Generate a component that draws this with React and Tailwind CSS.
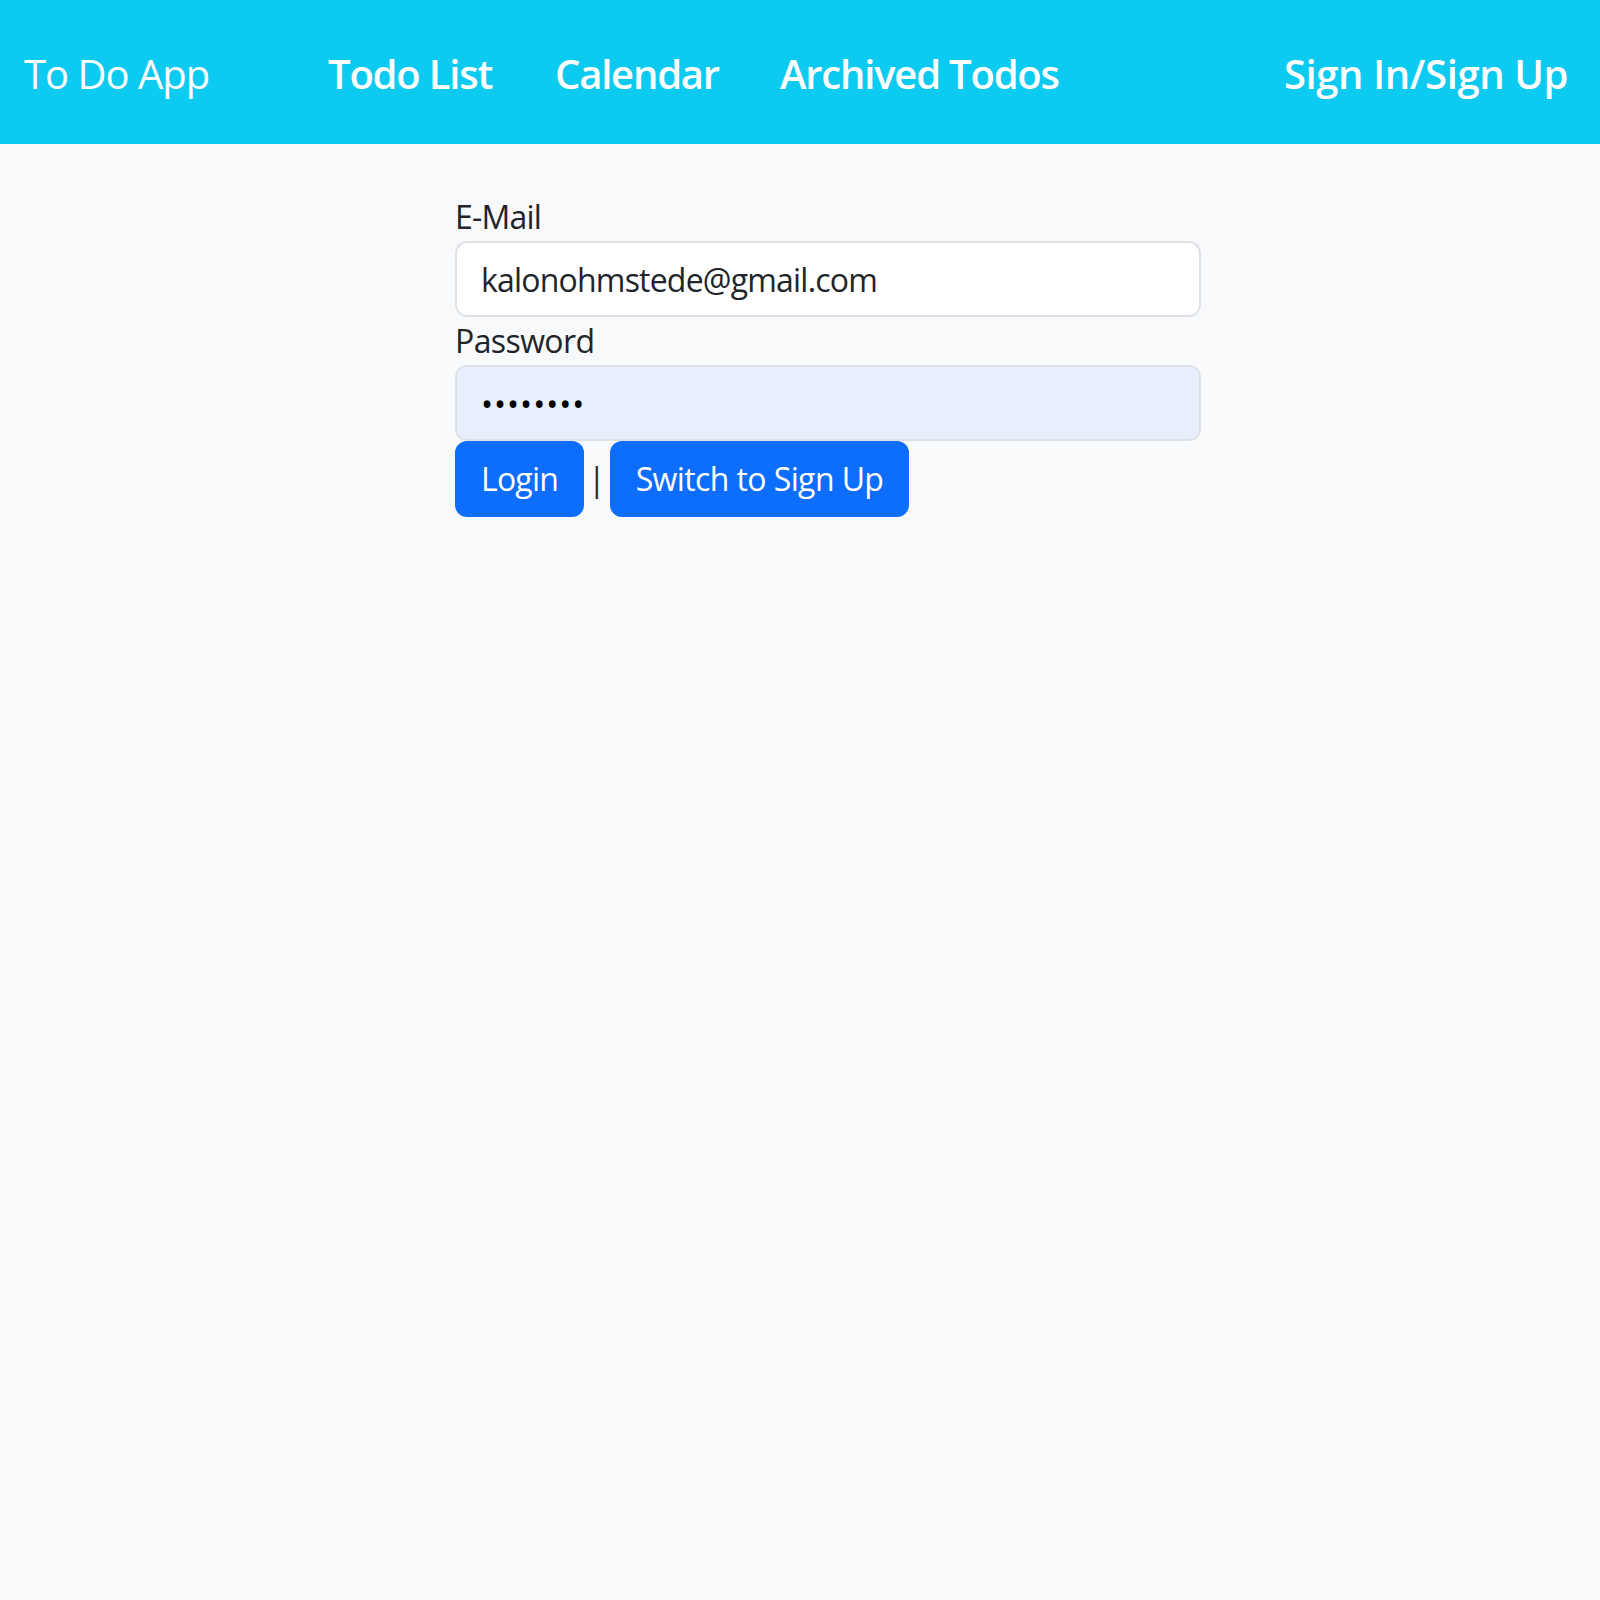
export default function App() {
  return (
    <div className="min-h-[1600px] bg-[#f8f9fa] font-['Open_Sans',sans-serif] text-[#212529]">
      <nav className="flex h-[144px] items-center bg-[#0dcaf0] pl-[24px] pr-[32px] pt-[4px] text-white">
        <span className="w-[186px] whitespace-nowrap text-[40px] leading-[60px] tracking-[-1px]">To Do App</span>
        <div className="ml-[118px] flex items-center">
          <span className="w-[162px] whitespace-nowrap text-[40px] font-semibold leading-[60px] tracking-[-1.2px]">Todo List</span>
          <span className="ml-[65px] w-[159px] whitespace-nowrap text-[40px] font-semibold leading-[60px] tracking-[-1.2px]">Calendar</span>
          <span className="ml-[66px] w-[275px] whitespace-nowrap text-[40px] font-semibold leading-[60px] tracking-[-1.2px]">Archived Todos</span>
        </div>
        <span className="ml-auto whitespace-nowrap text-[40px] font-semibold leading-[60px] tracking-[-0.4px]">Sign In/Sign Up</span>
      </nav>
      <main className="pl-[455px] pt-[49px]">
        <form className="flex w-[746px] flex-col">
          <label className="text-[32px] leading-[48px] tracking-[-0.8px]">E-Mail</label>
          <input
            type="email"
            readOnly
            value="kalonohmstede@gmail.com"
            className="h-[76px] w-full rounded-[12px] border-2 border-[#dee2e6] bg-white px-[24px] text-[32px] tracking-[-0.8px] text-[#212529] outline-none"
          />
          <label className="text-[32px] leading-[48px] tracking-[-0.6px]">Password</label>
          <input
            type="password"
            readOnly
            value="password"
            className="h-[76px] w-full rounded-[12px] border-2 border-[#dee2e6] bg-[#e8f0fe] px-[24px] text-[32px] tracking-[1px] text-black outline-none"
          />
          <div className="flex items-center">
            <button type="button" className="h-[76px] rounded-[12px] bg-[#0d6efd] px-[26px] text-[32px] tracking-[-0.8px] text-white">
              Login
            </button>
            <span className="mx-[4px] text-[32px] leading-[48px]">|</span>
            <button type="button" className="h-[76px] rounded-[12px] bg-[#0d6efd] px-[26px] text-[32px] tracking-[-0.6px] text-white">
              Switch to Sign Up
            </button>
          </div>
        </form>
      </main>
    </div>
  );
}
